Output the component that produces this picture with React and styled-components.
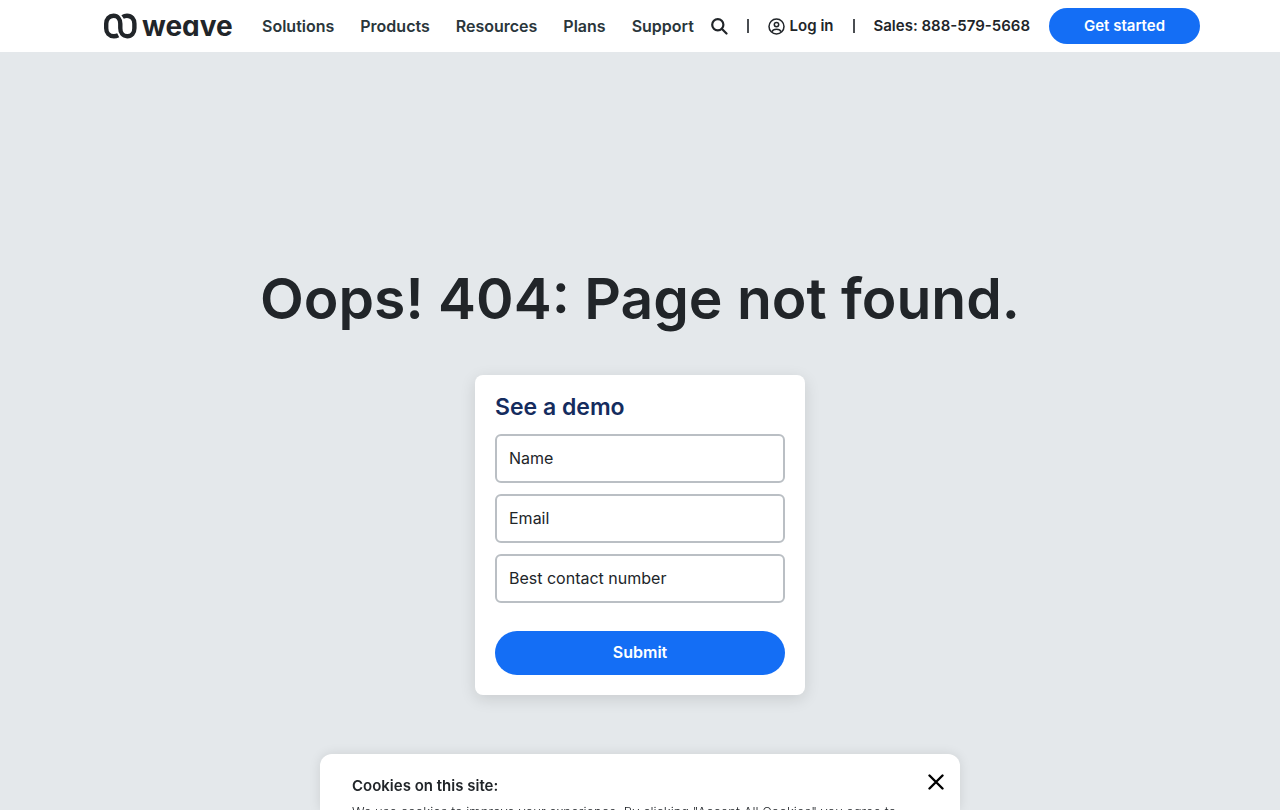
import React from 'react'
import styled, { createGlobalStyle } from 'styled-components'

const GlobalStyle = createGlobalStyle`
*{
    box-sizing:border-box;
}
body{
    margin:0;
    background-color:#e4e8eb;
    color:#212529;
    font-family:Inter, "Liberation Sans", sans-serif;
    font-size:16px;
    line-height:24px;
}
button, input{
    font-family:inherit;
}
a{
    color:inherit;
    text-decoration:none;
}
svg{
    flex-shrink:0;
}
`

const Header = styled.header`
background-color:#fff;
height:52px;
padding:0 80px 0 104px;
display:flex;
align-items:center;
justify-content:space-between;
font-size:15px;
font-weight:600;
white-space:nowrap;
`

const Group = styled.div`
display:flex;
align-items:center;
gap:${props => props.$gap || 0}px;
`

const Logo = styled.a`
display:flex;
align-items:center;
gap:5px;
width:128px;
margin-right:30px;
color:#212529;
`

const Word = styled.span`
font-size:28px;
line-height:28px;
font-weight:700;
font-feature-settings:"cv11";
`

const Nav = styled.nav`
display:flex;
gap:26px;
color:#2a363b;
font-size:16px;
`

const IconButton = styled.button`
display:flex;
padding:0;
border:0;
background:none;
color:${props => props.$color || '#212529'};
cursor:pointer;
`

const Divider = styled.span`
width:2px;
height:14px;
background-color:#4a4e52;
`

const Login = styled.a`
display:flex;
align-items:center;
gap:5px;
`

const Pill = styled.button`
border:0;
border-radius:24px;
background-color:#146ef5;
color:#fff;
font-size:${props => props.$tall ? 16 : 15}px;
font-weight:600;
height:${props => props.$tall ? 44 : 36}px;
padding:0 35px 2px;
cursor:pointer;
`

const Main = styled.main`
display:flex;
flex-direction:column;
align-items:center;
padding:211px 20px 114px;
`

const Title = styled.h1`
margin:0 0 40px;
font-size:57px;
line-height:72px;
font-weight:600;
text-align:center;
`

const Card = styled.form`
display:flex;
flex-direction:column;
width:100%;
max-width:330px;
padding:17px 20px 20px;
border-radius:8px;
background-color:#fff;
box-shadow:0 4px 16px rgba(0,0,0,0.12);
`

const CardTitle = styled.h2`
margin:0 0 12px;
color:#152c5e;
font-size:23px;
line-height:30px;
font-weight:600;
`

const Fields = styled.div`
display:grid;
gap:11px;
margin-bottom:28px;
`

const Field = styled.input`
width:100%;
height:49px;
padding:0 12px 2px;
border:2px solid #babfc4;
border-radius:6px;
background-color:#fff;
font-size:16px;
&::placeholder{
    color:#212529;
    opacity:1;
}
`

const Cookies = styled.section`
position:fixed;
bottom:0;
left:50%;
transform:translateX(-50%);
width:50%;
height:56px;
overflow:hidden;
padding:20px 16px 0 32px;
display:flex;
justify-content:space-between;
align-items:flex-start;
border-radius:12px 12px 0 0;
background-color:#fff;
box-shadow:0 0 12px rgba(0,0,0,0.1);
`

const CookieTitle = styled.h3`
margin:0 0 4px;
font-size:15px;
line-height:24px;
font-weight:600;
`

const CookieText = styled.p`
margin:0;
font-size:13px;
line-height:20px;
font-weight:300;
`

const Mark = () => (
  <svg width="33" height="26" viewBox="0 0 33 26" fill="none" stroke="currentColor" strokeWidth="4.400" aria-hidden="true">
    <path d="M14.200 22.200C12.900 22.900 11.400 23.200 9.900 23.200C5.300 23.200 2.200 19.800 2.200 15.200V10.800C2.200 6.200 5.200 2.800 9.500 2.800C13.800 2.800 16.300 6.200 16.300 10.800V15.200C16.300 19.800 19 23.200 23.200 23.200C27.600 23.200 30.400 19.800 30.400 15.200V10.800C30.400 6.200 27.600 2.800 23 2.800C21.300 2.800 19.800 3.200 18.600 4" />
  </svg>
)

const SearchIcon = () => (
  <svg width="17" height="17" viewBox="0 0 17 17" fill="none" stroke="currentColor" strokeWidth="2.200" strokeLinecap="round" aria-hidden="true">
    <circle cx="6.800" cy="6.800" r="5.600" />
    <path d="M11 11L15.500 15.500" />
  </svg>
)

const UserIcon = () => (
  <svg width="17" height="17" viewBox="0 0 17 17" fill="none" stroke="currentColor" strokeWidth="1.500" aria-hidden="true">
    <circle cx="8.500" cy="8.500" r="7.500" />
    <circle cx="8.500" cy="6.600" r="2.200" />
    <path d="M4 13.800C4.600 11.800 6.300 11.300 8.500 11.300C10.700 11.300 12.400 11.800 13 13.800" />
  </svg>
)

const CloseIcon = () => (
  <svg width="16" height="16" viewBox="0 0 16 16" fill="none" stroke="currentColor" strokeWidth="2.400" strokeLinecap="round" aria-hidden="true">
    <path d="M1.500 1.500L14.500 14.500M14.500 1.500L1.500 14.500" />
  </svg>
)

const links = ['Solutions', 'Products', 'Resources', 'Plans', 'Support']

const fields = [
  { name: 'name', type: 'text', label: 'Name' },
  { name: 'email', type: 'email', label: 'Email' },
  { name: 'phone', type: 'tel', label: 'Best contact number' },
]

const App = () => {
  return (
    <>
      <GlobalStyle />
      <Header>
        <Group>
          <Logo href="#">
            <Mark />
            <Word>weave</Word>
          </Logo>
          <Nav>
            {links.map(link => <a key={link} href="#">{link}</a>)}
          </Nav>
        </Group>
        <Group $gap={19}>
          <IconButton aria-label="Search"><SearchIcon /></IconButton>
          <Divider />
          <Login href="#">
            <UserIcon />
            Log in
          </Login>
          <Divider />
          <a href="tel:8885795668">Sales: 888-579-5668</a>
          <Pill>Get started</Pill>
        </Group>
      </Header>
      <Main>
        <Title>Oops! 404: Page not found.</Title>
        <Card onSubmit={e => e.preventDefault()}>
          <CardTitle>See a demo</CardTitle>
          <Fields>
            {fields.map(f => (
              <Field key={f.name} name={f.name} type={f.type} placeholder={f.label} aria-label={f.label} />
            ))}
          </Fields>
          <Pill type="submit" $tall>Submit</Pill>
        </Card>
      </Main>
      <Cookies>
        <div>
          <CookieTitle>Cookies on this site:</CookieTitle>
          <CookieText>We use cookies to improve your experience. By clicking "Accept All Cookies" you agree to</CookieText>
        </div>
        <IconButton $color="#000" aria-label="Close"><CloseIcon /></IconButton>
      </Cookies>
    </>
  )
}

export default App
